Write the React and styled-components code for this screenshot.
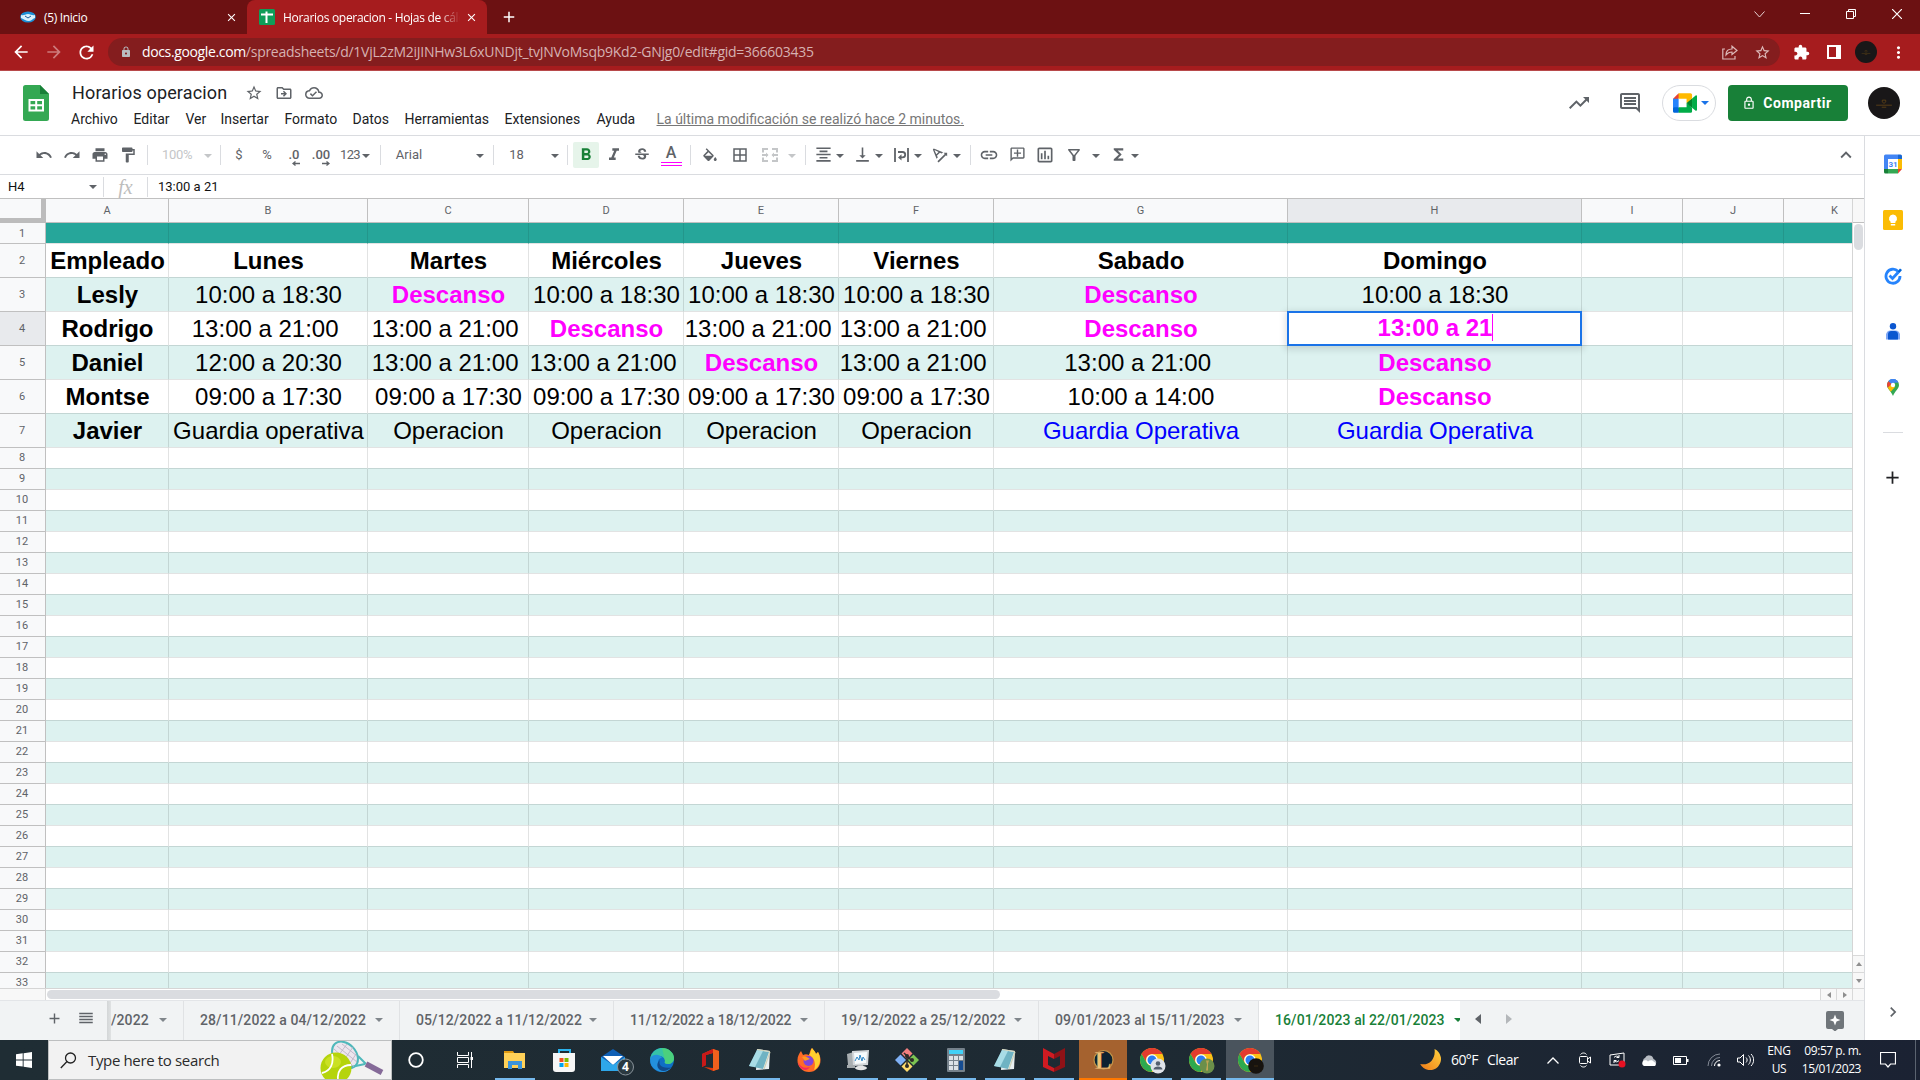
import React from "react";
import styled, { createGlobalStyle, css } from "styled-components";
import {
  MdUndo, MdRedo, MdPrint, MdFormatPaint, MdFormatBold, MdFormatItalic, MdStrikethroughS,
  MdBorderAll, MdFormatAlignCenter, MdVerticalAlignBottom, MdTextRotationAngleup,
  MdLink, MdOutlineAddComment, MdOutlineInsertChart, MdOutlineFilterAlt, MdFunctions, MdStarBorder,
  MdOutlineDriveFileMove, MdOutlineCloudDone, MdTrendingUp, MdOutlineComment, MdOutlineLock, MdLock,
  MdExpandLess, MdExtension, MdArrowBack, MdArrowForward, MdRefresh, MdAdd, MdClose, MdChevronRight,
  MdMoreVert, MdReorder,
} from "react-icons/md";

const SANS = `"Liberation Sans", Arial, sans-serif`;
const ROBOTO = `Roboto, "Liberation Sans", sans-serif`;
const SEGOE = `"Open Sans", "Noto Sans", sans-serif`;

const Global = createGlobalStyle`
  * { box-sizing: border-box; }
  body { margin: 0; background: #fff; font-family: ${ROBOTO}; overflow: hidden; }
  svg { display: block; flex: none; }
`;

const Screen = styled.div`
  width: 1920px;
  height: 1080px;
  display: flex;
  flex-direction: column;
  overflow: hidden;
`;

const Slot = styled.div`
  width: ${(p) => p.$w}px;
  flex: none;
  display: flex;
  align-items: center;
  justify-content: center;
  white-space: nowrap;
`;

/* ---------- browser chrome ---------- */
const TabStrip = styled.div`
  height: 34px;
  flex: none;
  display: flex;
  background: #6c1112;
  color: #fff;
  font: 12px ${SEGOE};
`;
const BrowserTab = styled.div`
  width: ${(p) => p.$w}px;
  display: flex;
  align-items: center;
  padding: 0 9px 0 ${(p) => (p.$active ? 12 : 20)}px;
  background: ${(p) => (p.$active ? "#a61c1e" : "transparent")};
  border-radius: 8px 8px 0 0;
`;
const TabTitle = styled.span`
  flex: 1;
  margin-left: 8px;
  overflow: hidden;
  white-space: nowrap;
  letter-spacing: ${(p) => p.$ls}px;
  ${(p) => p.$fade && css`
    margin-right: 5px;
    mask-image: linear-gradient(90deg, #000 88%, transparent 100%);
  `}
`;
const WindowControls = styled.div`
  margin-left: auto;
  display: flex;
  height: 28px;
`;
const AddressRow = styled.div`
  height: 37px;
  flex: none;
  display: flex;
  align-items: center;
  background: #a61c1e;
  border-bottom: 1px solid #b84a4b;
  color: #fff;
  padding-left: 5px;
`;
const Omnibox = styled.div`
  width: 1672px;
  height: 28px;
  margin-left: 6px;
  padding: 0 2px 0 12px;
  border-radius: 14px;
  background: #841d1e;
  display: flex;
  align-items: center;
  color: #d6b1b1;
  font: 14px ${SEGOE};
`;
const Url = styled.span`
  flex: 1;
  margin-left: 10px;
  padding-bottom: 1px;
  letter-spacing: -0.27px;
  white-space: nowrap;
  b { font-weight: 400; color: #fff; letter-spacing: -0.36px; }
`;
const Avatar = styled.div`
  width: ${(p) => p.$d}px;
  height: ${(p) => p.$d}px;
  border-radius: 50%;
  background: #191718;
  display: flex;
  align-items: center;
  justify-content: center;
`;

/* ---------- document header ---------- */
const DocHeader = styled.header`
  height: 65px;
  flex: none;
  display: flex;
  border-bottom: 1px solid #dadce0;
  color: #5f6368;
`;
const LogoBox = styled.div`
  width: 71px;
  padding: 14px 0 0 23px;
`;
const TitleBlock = styled.div`
  display: flex;
  flex-direction: column;
  flex: 1;
`;
const TitleRow = styled.div`
  height: 26px;
  margin-top: 9px;
  display: flex;
  align-items: center;
`;
const DocTitle = styled.h1`
  margin: 0 10px 0 1px;
  width: 159px;
  font: 400 18px/26px ${ROBOTO};
  letter-spacing: 0.15px;
  color: #202124;
  white-space: nowrap;
`;
const MenuRow = styled.nav`
  display: flex;
  height: 26px;
  align-items: center;
  font-size: 14px;
  color: #202124;
  white-space: nowrap;
`;
const MenuItem = styled.span`
  width: ${(p) => p.$w}px;
`;
const LastEdit = styled.a`
  margin-left: 6px;
  color: #777;
  text-decoration: underline;
`;
const HeaderActions = styled.div`
  display: flex;
  align-items: center;
  height: 64px;
`;
const MeetPill = styled.div`
  width: 54px;
  height: 36px;
  margin: 0 12px 0 7px;
  border: 1px solid #dadce0;
  border-radius: 18px;
  display: flex;
  align-items: center;
  padding-left: 10px;
  gap: 4px;
`;
const ShareButton = styled.button`
  width: 120px;
  height: 36px;
  padding: 0 2px 0 0;
  margin-right: 20px;
  border: 0;
  border-radius: 4px;
  background: #188038;
  color: #fff;
  font: 700 14px ${ROBOTO};
  letter-spacing: 0.55px;
  display: flex;
  align-items: center;
  justify-content: center;
  gap: 7px;
`;

/* ---------- workspace ---------- */
const Workspace = styled.div`
  flex: 1;
  min-height: 0;
  display: flex;
`;
const Editor = styled.main`
  width: 1864px;
  display: flex;
  flex-direction: column;
`;
const SidePanel = styled.aside`
  flex: 1;
  border-left: 1px solid #dadce0;
  display: flex;
  flex-direction: column;
  align-items: center;
`;
const SideSlot = styled.div`
  height: ${(p) => p.$h}px;
  display: flex;
  align-items: center;
  justify-content: center;
`;
const SideRule = styled.div`
  width: 20px;
  height: 1px;
  background: #dadce0;
`;
const ToolbarRow = styled.div`
  height: 39px;
  flex: none;
  display: flex;
  align-items: center;
  padding-left: 29px;
  padding-bottom: 1px;
  border-bottom: 1px solid #dadce0;
  color: #5f6368;
  font-size: 13px;
`;
const Divider = styled.div`
  width: 1px;
  height: 20px;
  background: #dadce0;
`;
const Caret = styled.i`
  width: 0;
  height: 0;
  flex: none;
  border: 4px solid transparent;
  border-top-color: ${(p) => p.$c || "#5f6368"};
  border-bottom: 0;
  margin-top: ${(p) => (p.$raised ? 0 : 2)}px;
`;
const BoldToggle = styled.div`
  width: 26px;
  height: 26px;
  border-radius: 2px;
  background: #e6f4ea;
  color: #188038;
  display: flex;
  align-items: center;
  justify-content: center;
`;
const Decimal = styled.div`
  display: flex;
  flex-direction: column;
  align-items: flex-end;
  font: 500 13px/13px ${ROBOTO};
  margin-top: 5px;
`;
const TextColor = styled.div`
  width: 21px;
  height: 21px;
  margin-top: 2px;
  font: 500 16px/16px ${ROBOTO};
  text-align: center;
  border-bottom: 4px double #ff00ff;
`;
const ToolText = styled.span`
  color: ${(p) => (p.$dim ? "#c4c6c8" : "#5f6368")};
  letter-spacing: ${(p) => p.$ls || 0}px;
`;
const FormulaRow = styled.div`
  height: 23px;
  flex: none;
  display: flex;
  align-items: center;
  color: #111;
  font-size: 13px;
`;
const NameBox = styled.div`
  width: 103px;
  display: flex;
  align-items: center;
  justify-content: space-between;
  padding: 0 6px 0 8px;
`;
const Fx = styled.div`
  width: 43px;
  text-align: center;
  color: #bdbdbd;
  font: italic 20px/20px "Liberation Serif", serif;
`;
const FormulaText = styled.span`
  margin-left: 10px;
  letter-spacing: 0;
`;

/* ---------- grid ---------- */
const COLS = [123, 199, 161, 155, 155, 155, 294, 294, 101, 101, 68];
const TRACKS = "46px " + COLS.map((w) => w + "px").join(" ");

const SheetArea = styled.div`
  display: flex;
  height: 791px;
  flex: none;
  border-top: 1px solid #c0c0c0;
`;
const Grid = styled.div`
  width: 1853px;
  flex: none;
  overflow: hidden;
  border-right: 1px solid #d5d5d5;
  border-bottom: 1px solid #d5d5d5;
`;
const Row = styled.div`
  display: grid;
  grid-template-columns: ${TRACKS};
  height: ${(p) => p.$h}px;
`;
const HeadCell = styled.div`
  display: flex;
  align-items: center;
  justify-content: center;
  padding-right: ${(p) => (p.$row ? 1 : 0)}px;
  padding-bottom: ${(p) => (p.$short ? 1 : 0)}px;
  background: ${(p) => (p.$on ? "#e8eaed" : "#f8f9fa")};
  border-right: 1px solid #c0c0c0;
  border-bottom: 1px solid #c0c0c0;
  color: #5f6368;
  font: 11px ${ROBOTO};
  ${(p) => p.$last && css`
    border-right: 0;
    width: 68px;
    padding-left: 33px;
  `}
`;
const Corner = styled.div`
  background: #f8f9fa;
  border-right: 5px solid #bcbcbc;
  border-bottom: 5px solid #bcbcbc;
`;
const TONES = {
  head: ["#26a69a", "#23968b", "#e2e3e3"],
  white: ["#ffffff", "#e2e3e3", "#c3d6d4"],
  band: ["#ddf2f0", "#c3d6d4", "#e2e3e3"],
};
const Cell = styled.div`
  position: relative;
  min-width: 0;
  padding-left: 1px;
  background: ${(p) => TONES[p.$tone][0]};
  border-right: ${(p) => (p.$last ? 0 : 1)}px solid ${(p) => TONES[p.$tone][1]};
  border-bottom: 1px solid ${(p) => TONES[p.$tone][2]};
  display: flex;
  justify-content: center;
  white-space: pre;
  font: ${(p) => (p.$bold ? 700 : 400)} 24px/33px ${SANS};
  color: ${(p) => p.$color || "#000"};
`;
const CellEditor = styled.div`
  position: absolute;
  inset: -1px;
  z-index: 2;
  padding-left: 2px;
  border: 2px solid #1a73e8;
  background: #fff;
  box-shadow: 0 2px 6px 2px rgba(60, 64, 67, 0.15);
  color: #ff00ff;
  font: 700 24px/30px ${SANS};
  display: flex;
  justify-content: center;
`;
const Cursor = styled.span`
  width: 1px;
  height: 27px;
  margin-top: 1px;
  background: #ff00ff;
`;
const VScroll = styled.div`
  flex: 1;
  display: flex;
  flex-direction: column;
  align-items: center;
`;
const VHead = styled.div`
  align-self: stretch;
  height: 24px;
  background: #f8f8f8;
  border-bottom: 1px solid #c0c0c0;
`;
const VThumb = styled.div`
  width: 9px;
  height: 26px;
  margin-top: 1px;
  border-radius: 5px;
  background: #dadce0;
`;
const VButtons = styled.div`
  margin-top: auto;
  align-self: stretch;
`;
const ScrollButton = styled.div`
  width: ${(p) => p.$w}px;
  height: ${(p) => p.$h}px;
  display: flex;
  align-items: center;
  justify-content: center;
  background: #f8f8f8;
  border: solid #d9d9d9;
  border-width: ${(p) => p.$b};
`;
const HScroll = styled.div`
  height: 11px;
  flex: none;
  display: flex;
  align-items: center;
`;
const HCorner = styled.div`
  width: 46px;
  height: 11px;
  background: #f8f8f8;
  border-right: 1px solid #d9d9d9;
`;
const HThumb = styled.div`
  width: 953px;
  height: 9px;
  margin: 0 auto 0 1px;
  border-radius: 5px;
  background: #dadce0;
`;

/* ---------- sheet tabs ---------- */
const SheetBar = styled.div`
  flex: 1;
  display: flex;
  background: #f1f3f4;
  border-top: 1px solid #e3e5e8;
  color: #5f6368;
`;
const SheetTools = styled.div`
  width: 107px;
  display: flex;
  align-items: center;
  padding: 0 0 5px 39px;
`;
const TabShade = styled.div`
  width: 6px;
  margin-right: -2px;
  background: linear-gradient(90deg, #d3d6d7, #e6e8e9);
`;
const SheetTab = styled.div`
  width: ${(p) => p.$w}px;
  padding: 0 16px 1px ${(p) => (p.$cut ? 0 : 16)}px;
  display: flex;
  align-items: center;
  justify-content: space-between;
  overflow: hidden;
  border-right: 1px solid ${(p) => (p.$on ? "transparent" : "#e0e2e4")};
  background: ${(p) => (p.$on ? "#fff" : "#f1f3f4")};
  color: ${(p) => (p.$on ? "#188038" : "#5f6368")};
  font: 500 14px ${ROBOTO};
  letter-spacing: ${(p) => p.$ls || 0.1}px;
  white-space: nowrap;
  ${(p) => p.$on && css`
    padding-right: 0;
    border-right: 0;
  `}
`;
const SheetNav = styled.div`
  flex: 1;
  display: flex;
  align-items: center;
`;

/* ---------- taskbar ---------- */
const TaskBar = styled.footer`
  height: 40px;
  flex: none;
  display: flex;
  background: linear-gradient(90deg, #1f2d34, #1e2a33 60%, #1b2233);
  color: #fff;
  font: 12px ${SEGOE};
`;
const SearchBox = styled.div`
  width: 344px;
  height: 40px;
  border: 1px solid #bdbfc0;
  background: #f2f2f2;
  color: #2b2b2b;
  display: flex;
  align-items: center;
  padding-left: 11px;
  font: 15px ${SEGOE};
`;
const SearchText = styled.span`
  flex: 1;
  margin-left: 11px;
  letter-spacing: -0.35px;
`;
const Apps = styled.div`
  display: flex;
  gap: 1px;
  margin-left: 2px;
`;
const AppButton = styled.div`
  width: 48px;
  height: 40px;
  display: flex;
  flex-direction: column;
  align-items: center;
  justify-content: space-between;
  padding-top: 8px;
  background: ${(p) => ({ alert: "#a5622f", active: "#4a545d" }[p.$state] || "transparent")};
`;
const Under = styled.div`
  width: ${(p) => (p.$state === "open" ? 40 : 48)}px;
  height: 2px;
  background: ${(p) => ({ alert: "#ff7800", active: "#76b9ed", open: "#76b9ed" }[p.$state] || "transparent")};
`;
const Tray = styled.div`
  margin-left: auto;
  display: flex;
  align-items: center;
`;
const TrayText = styled.div`
  width: ${(p) => p.$w}px;
  text-align: ${(p) => p.$align || "left"};
  line-height: 18px;
  letter-spacing: ${(p) => p.$ls || 0}px;
  font-size: ${(p) => p.$fs || 12}px;
  white-space: pre;
`;
const DesktopEdge = styled.div`
  width: 5px;
  height: 40px;
  border-left: 1px solid #5b6370;
`;

/* ---------- drawings ---------- */
const Svg = ({ w = 16, h = w, vb, children, ...r }) => (
  <svg width={w} height={h} viewBox={vb || `0 0 ${w} ${h}`} fill="none" {...r}>{children}</svg>
);

const Handshake = () => (
  <Svg w={16} h={12}>
    <ellipse cx="8" cy="6" rx="7.8" ry="5.6" fill="#1b8fd6" />
    <path d="M1 4c3 1 4-1 7-1s4 2 7 1v3c-2 0-3 3-6 3S4 8 1 7z" fill="#d9f0fb" />
    <path d="M5 5l3 2 3-2" stroke="#1b5f9d" />
  </Svg>
);
const SheetFavicon = () => (
  <Svg w={16}>
    <rect width="16" height="16" rx="1.5" fill="#0f9d58" />
    <path d="M2 5.5h12M7.5 2.5V14" stroke="#fff" strokeWidth="2" />
  </Svg>
);
const SheetsLogo = () => (
  <Svg w={26} h={36}>
    <path d="M2.5 0H17l9 9v24.500a2.500 2.500 0 0 1-2.500 2.500h-21A2.500 2.500 0 0 1 0 33.500v-31A2.500 2.500 0 0 1 2.500 0z" fill="#34a853" />
    <path d="M17 0l9 9h-9z" fill="#188038" />
    <path d="M5.500 14h15.500v12.500H5.500zM7.500 16v3.200h4.700V16zm6.700 0v3.200H19V16zm-6.700 5.200v3.300h4.700v-3.300zm6.700 0v3.300H19v-3.300z" fill="#fff" fillRule="evenodd" />
  </Svg>
);
const Crest = ({ s }) => (
  <Svg w={s} h={s / 2} vb="0 0 16 8">
    <path d="M6.500 1h3v1.500L8 4 6.500 2.500zM1 5.500h14M6 7.300h4" stroke="#5d4216" strokeWidth=".8" />
  </Svg>
);
const MeetLogo = () => (
  <Svg w={24} h={20} vb="0 0 87.5 72">
    <path fill="#00832d" d="M49.500 36l8.530 9.750 11.470 7.330 2-17.020-2-16.640-11.690 6.440z" />
    <path fill="#0066da" d="M0 51.500V66c0 3.315 2.685 6 6 6h14.500l3-10.960-3-9.540-9.950-3z" />
    <path fill="#e94235" d="M20.500 0L0 20.500l10.550 3 9.950-3 2.950-9.410z" />
    <path fill="#2684fc" d="M20.500 20.500H0v31h20.500z" />
    <path fill="#00ac47" d="M82.600 8.680L69.500 19.420v33.660l13.160 10.790c1.970 1.540 4.850.135 4.850-2.370V11c0-2.535-2.945-3.925-4.910-2.320zM49.500 36v15.500h-29V72h43c3.315 0 6-2.685 6-6V53.080z" />
    <path fill="#ffba00" d="M63.500 0h-43v20.500h29V36l20-16.570V6c0-3.315-2.685-6-6-6z" />
  </Svg>
);
const BucketIcon = () => (
  <Svg w={18} vb="0 -3 24 24">
    <path fill="#5f6368" d="M16.560 8.940L7.620 0 6.210 1.410l2.380 2.380-5.150 5.150a1.490 1.490 0 0 0 0 2.120l5.500 5.500c.290.290.680.440 1.060.440s.770-.150 1.060-.440l5.500-5.500c.590-.580.590-1.530 0-2.120zM5.210 10L10 5.210 14.790 10H5.210zM19 11.500s-2 2.170-2 3.500c0 1.100.900 2 2 2s2-.900 2-2c0-1.330-2-3.500-2-3.500z" />
  </Svg>
);
const MergeIcon = () => (
  <Svg w={16} h={14} stroke="#c4c6c8" strokeWidth="2">
    <path d="M1 4.500V1h5M10 1h5v3.500M1 9.500V13h5M10 13h5V9.500M0 7h5.500M10.500 7H16" />
    <path d="M4 4.500L6.500 7 4 9.500zM12 4.500L9.500 7l2.500 2.500z" fill="#c4c6c8" stroke="none" />
  </Svg>
);
const WrapIcon = () => (
  <Svg w={15} h={14} stroke="#5f6368" strokeWidth="1.800">
    <path d="M1 0v14M14 0v14M4 4h4.500a2.700 2.700 0 0 1 0 5.400H6.500" />
    <path d="M7.500 6.300v6.200L4 9.400z" fill="#5f6368" stroke="none" />
  </Svg>
);
const Calendar = () => (
  <Svg w={20}>
    <path d="M1 2a1.500 1.500 0 0 1 1.500-1.500H15V5H5v10H1z" fill="#4285f4" />
    <path d="M15 .5h2.500A1.500 1.500 0 0 1 19 2v3h-4z" fill="#1967d2" />
    <path d="M15 5h4v10h-4z" fill="#fbbc04" />
    <path d="M5 15h10v4.500H5z" fill="#34a853" />
    <path d="M1 15h4v4.500H2.500A1.500 1.500 0 0 1 1 18z" fill="#188038" />
    <path d="M15 15h4l-4 4.500z" fill="#ea4335" />
    <text x="10" y="13" textAnchor="middle" fontSize="8" fontWeight="700" fontFamily="Roboto" fill="#4285f4">31</text>
  </Svg>
);
const Keep = () => (
  <Svg w={20}>
    <rect width="20" height="20" rx="1.500" fill="#fbbc04" />
    <path d="M10 4.500a4 4 0 0 1 2.400 7.200V13H7.600v-1.300A4 4 0 0 1 10 4.500zM7.800 14h4.400v1.500H7.800z" fill="#fff" />
  </Svg>
);
const Tasks = () => (
  <Svg w={18}>
    <path d="M14 4.300A7 7 0 1 0 16 9" stroke="#2684fc" strokeWidth="2.800" />
    <path d="M5.500 8.500L8.500 11.500l6-6.500" stroke="#2684fc" strokeWidth="2.800" />
    <path d="M13.500 4.500l2.500-3 2 1.500-2.500 3z" fill="#0066da" />
  </Svg>
);
const Contact = () => (
  <Svg w={14} h={17}>
    <rect y="7.500" width="14" height="9" rx="4.500" fill="#80a8f5" />
    <path d="M0 11h14v5.500H0z" fill="#80a8f5" />
    <path d="M2 11.500a3.500 3.500 0 0 1 3.500-3.500h3A3.500 3.500 0 0 1 12 11.500v5H2z" fill="#0b57d0" />
    <circle cx="7" cy="3.200" r="3.200" fill="#0b57d0" />
  </Svg>
);
const MapPin = () => (
  <Svg w={12} h={17}>
    <path d="M6 0a6 6 0 0 1 6 6c0 4-4.500 6.500-6 11C4.500 12.500 0 10 0 6a6 6 0 0 1 6-6z" fill="#34a853" />
    <path d="M1.300 2.200A6 6 0 0 1 9 .8L4 7.500z" fill="#4285f4" />
    <path d="M1.400 2.200L4.500 5 1 9A6 6 0 0 1 1.400 2.200z" fill="#ea4335" />
    <path d="M.8 8.800L4.500 5 8 8l-4.300 4.800z" fill="#fbbc04" />
    <path d="M11.500 3.500A6 6 0 0 0 7.800.3L4.500 4z" fill="#4285f4" />
    <circle cx="6" cy="6" r="2.200" fill="#fff" />
  </Svg>
);
const Explore = () => (
  <Svg w={18} h={20}>
    <path d="M2 0h14a2 2 0 0 1 2 2v14a2 2 0 0 1-2 2h-4l-3 2.500L6 18H2a2 2 0 0 1-2-2V2a2 2 0 0 1 2-2z" fill="#70757a" />
    <path d="M9 3.500l1.500 4 4 1.500-4 1.500-1.500 4-1.500-4-4-1.500 4-1.500z" fill="#fff" />
  </Svg>
);
const WindowsLogo = () => (
  <Svg w={16}>
    <path fill="#fff" d="M0 2.300L6.700 1.300v6.200H0zM7.600 1.200L16 0v7.500H7.600zM0 8.400h6.700v6.200L0 13.700zM7.600 8.400H16V16l-8.400-1.200z" />
  </Svg>
);
const Tennis = () => (
  <Svg w={66} h={38}>
    <g stroke="#4fb8bb" strokeWidth="2">
      <ellipse cx="25" cy="14" rx="11" ry="15" transform="rotate(-42 25 14)" fill="#ece6ee" />
      <path d="M31 26l14-3M38 15l8 8" />
    </g>
    <path d="M14 8l20 18M17 5l20 16M22 3l15 12M13 14l15 14M20 25L33 6M15 19L27 3M27 27l9-14" stroke="#b9aec2" strokeWidth=".8" />
    <path d="M46 23l16 8.500" stroke="#856a98" strokeWidth="5.500" />
    <circle cx="16" cy="27" r="15.500" fill="#b5d40c" />
    <ellipse cx="13" cy="21" rx="8" ry="6" fill="#d3e72f" opacity=".7" />
    <path d="M2 32c9-2 12-10 10-19M31 24c-10 0-14 7-13 14" stroke="#fff" strokeWidth="1.800" />
  </Svg>
);
const TaskView = () => (
  <Svg w={16} h={16} stroke="#fff">
    <path d="M.5 0v3.500h11V0M.5 16v-3.500h11V16M.5 5.500h11v5H.5zM14.500 0v5M14.500 8v8" />
    <path d="M13.500 5h2.500v3h-2.500z" fill="#fff" stroke="none" />
  </Svg>
);
const Folder = () => (
  <Svg w={24}>
    <path d="M1 3h9l2 3H1z" fill="#e09a12" /><path d="M1 5h21v15H1z" fill="#ffd158" />
    <path d="M5 13h14v8h-4v-4H9v4H5z" fill="#3b94dc" />
  </Svg>
);
const Store = () => (
  <Svg w={24}>
    <path d="M7 6V2h11v4" stroke="#2bb3ee" strokeWidth="2" />
    <path d="M1 5h22v16a3 3 0 0 1-3 3H4a3 3 0 0 1-3-3z" fill="#f6f6f6" />
    <path d="M7.500 10h4v4h-4z" fill="#f25022" /><path d="M12.500 10h4v4h-4z" fill="#7fba00" />
    <path d="M7.500 15h4v4h-4z" fill="#00a4ef" /><path d="M12.500 15h4v4h-4z" fill="#ffb900" />
  </Svg>
);
const Mail = () => (
  <Svg w={34} h={28} style={{ marginLeft: 8 }}>
    <path d="M1 9L13 1l12 8v14H1z" fill="#0f5fb5" /><path d="M3 8h20L13 17z" fill="#fff" />
    <path d="M1 9l12 8L25 9v14H1z" fill="#2ea7ea" />
    <circle cx="25.500" cy="19" r="8" fill="#2b3940" stroke="#89939a" />
    <text x="25.500" y="23.300" textAnchor="middle" fontSize="12" fontWeight="700" fontFamily="Open Sans" fill="#fff">4</text>
  </Svg>
);
const Edge = () => (
  <Svg w={24}>
    <circle cx="12" cy="12" r="12" fill="#0f6fc5" />
    <path d="M.5 9C3 2 8 0 12 0c7 0 12 5 12 10 0 4-3 6-6 6-3 0-4-1-3-3 0-3-3-5-6-5-4 0-7 1-8.500 4z" fill="#36c3a8" />
    <path d="M12 0c7 0 12 5 12 10 0 4-3 6-6 6-3 0-4-1-3-3z" fill="#54d66b" opacity=".7" />
    <path d="M1 9c3-3 9-3 11 1-4 0-5 4-3 8 3 4 8 4 12 2-3 4-9 5-13 3C1 20-1 14 1 9z" fill="#2390dd" />
    <path d="M10 12c-2 4 1 9 11 7.500C18 23 13 24 10 22c-4-3-3-8 0-10z" fill="#114a8b" />
  </Svg>
);
const Office = () => (
  <Svg w={20} h={24}>
    <path d="M1 6l11-5 6 2v18l-6 2-9-4 9 1V5L5 7v10l-4 2z" fill="#e2380c" />
    <path d="M12 1l6 2v18l-6 2z" fill="#f0601d" /><path d="M1 6l11-5v4L5 7v10l-4 2z" fill="#c91919" />
  </Svg>
);
const Notepad = () => (
  <Svg w={24}>
    <path d="M9 1l13 2-1 18-13 1z" fill="#e8eff1" /><path d="M9 2l12 2-6 17-14-3z" fill="#6fb3c3" />
    <path d="M9 2l6 1-8 16-6-1z" fill="#a8dce6" /><path d="M9 1.500l13 2M16 21l6-17" stroke="#cfd3ba" strokeWidth="1.200" />
  </Svg>
);
const Firefox = () => (
  <Svg w={24}>
    <path d="M12 24A11.500 11.500 0 0 1 .5 12C.5 8 2 6 4 3l2 4c2-1 4-1 6 0 1-3 1-5 3-7 2 3 3 3 4 6l2-2c2 3 2.500 6 2.500 8A11.500 11.500 0 0 1 12 24z" fill="#ff6a26" />
    <path d="M15 0c2 3 3 3 4 6l2-2c4 7 2 15-4 18 2-6 1-12-5-15 2-2 1-4 3-7z" fill="#ffd02e" />
    <path d="M1 14c2 5 7 7 12 5-4 6-11 2-12-5z" fill="#f52a5c" />
    <circle cx="11.500" cy="13" r="5" fill="#8046d9" /><path d="M5 9c3-1 5 0 8 2-2 1-4 1-5 2z" fill="#ff9a1f" />
  </Svg>
);
const Monitor = () => (
  <Svg w={26} h={24}>
    <path d="M2 6l10-3v14H3z" fill="#a9afb2" /><path d="M7 3l17-1-1 15-15 1z" fill="#d3d7da" />
    <path d="M9 5l13-1-1 11-11 1z" fill="#f6fbfd" /><path d="M10 13l2-4 2 3 1-5 2 6 1-4 2 3" stroke="#3187c6" />
    <path d="M13 17h5l1 3h-7z" fill="#b6bbbd" /><ellipse cx="16" cy="20" rx="6" ry="2.200" fill="#e3e5e6" />
    <path d="M2 17h8v3H2z" fill="#a4aaad" />
  </Svg>
);
const Git = () => (
  <Svg w={24}>
    <path d="M12 0l5.500 5.500L12 11 6.500 5.500z" fill="#f27f7f" /><path d="M18.500 6.500L24 12l-5.500 5.500L13 12z" fill="#7cc452" />
    <path d="M12 13l5.500 5.500L12 24l-5.500-5.500z" fill="#ffdb6b" /><path d="M5.500 6.500L11 12l-5.500 5.500L0 12z" fill="#7fb0f5" />
    <g stroke="#2d2b27" strokeWidth="1.500"><path d="M9 5l8 8M12 8v10" /></g>
    <g fill="#2d2b27"><circle cx="12" cy="8" r="2" /><circle cx="17" cy="12" r="2" /><circle cx="12" cy="18" r="2" /></g>
  </Svg>
);
const Calculator = () => (
  <Svg w={18} h={24}>
    <rect width="18" height="24" rx="1" fill="#75818b" /><path d="M2 2h14v4H2z" fill="#42d1f7" />
    <path d="M2 8h4v4H2zM7 8h4v4H7zM12 8h4v4h-4zM2 13h4v4H2zM7 13h4v4H7zM2 18h4v4H2zM7 18h4v4H7z" fill="#dce2e7" />
    <path d="M12 13h4v9h-4z" fill="#164c91" />
  </Svg>
);
const McAfee = () => (
  <Svg w={22} h={24}>
    <path d="M0 0l11 6v5L5 8v9l6 3v4L0 19z" fill="#d01b22" />
    <path d="M22 0L11 6v5l6-3v9l-6 3v4l11-5z" fill="#8f1217" />
  </Svg>
);
const League = () => (
  <Svg w={24}>
    <circle cx="12.500" cy="12" r="9.500" fill="#0b2231" stroke="#c29447" strokeWidth="1.200" />
    <text x="12" y="20.500" textAnchor="middle" fontSize="25" fontWeight="700" fontFamily="Liberation Serif" fill="#eec375" stroke="#a5622f" strokeWidth=".3">L</text>
  </Svg>
);
const Chrome = ({ badge }) => (
  <Svg w={28} h={26} style={{ marginLeft: 3 }}>
    <circle cx="12" cy="12" r="12" fill="#fbc116" />
    <path d="M1.600 6A12 12 0 0 1 22.400 6H12a6 6 0 0 0-5.500 8.500z" fill="#e33b2e" />
    <path d="M1.600 6l5.200 9A6 6 0 0 0 14 17.600L11.500 24A12 12 0 0 1 1.600 6z" fill="#2da94f" />
    <circle cx="12" cy="12" r="5.800" fill="#fff" /><circle cx="12" cy="12" r="4.500" fill="#2c7ef0" />
    {badge === "user" && <g><circle cx="18" cy="18" r="7.500" fill="#dfe3e9" /><circle cx="18" cy="15.500" r="2.300" fill="#54606f" /><path d="M13.500 21.500c0-4 9-4 9 0z" fill="#54606f" /></g>}
    {badge === "photo" && <g><circle cx="18" cy="18" r="7.500" fill="#6b8f4a" /><path d="M17 12.500h3l-1 3v7h-2l1-6z" fill="#c1a553" /></g>}
    {badge === "dark" && <g><circle cx="18" cy="18" r="7.800" fill="#17130f" /><path d="M16 18h4" stroke="#3a2a12" /></g>}
  </Svg>
);
const Moon = () => (
  <Svg w={22}>
    <defs><linearGradient id="moon" x1="0" y1="1" x2="1" y2="0"><stop stopColor="#f07a18" /><stop offset="1" stopColor="#ffd23d" /></linearGradient></defs>
    <path d="M14.500 0A11 11 0 1 1 .2 15C9 17 16 10 14.500 0z" fill="url(#moon)" />
  </Svg>
);

/* ---------- content ---------- */
const MENUS = [["Archivo", 62.5], ["Editar", 52], ["Ver", 35], ["Insertar", 64], ["Formato", 68], ["Datos", 52], ["Herramientas", 100], ["Extensiones", 92], ["Ayuda", 54]];
const D = "Descanso";
const M = "10:00 a 18:30";
const T = "13:00 a 21:00 ";
const N = "09:00 a 17:30";
const O = "Operacion";
const GO = "Guardia Operativa";
const DATA = {
  2: ["Empleado", "Lunes", "Martes", "Miércoles", "Jueves", "Viernes", "Sabado", "Domingo"],
  3: ["Lesly", M, D, M, M, M, D, M],
  4: ["Rodrigo", T, T, D, T, T, D, "13:00 a 21"],
  5: ["Daniel", "12:00 a 20:30", T, T, D, T, T, D],
  6: ["Montse", N, N, N, N, N, "10:00 a 14:00", D],
  7: ["Javier", "Guardia operativa", O, O, O, O, GO, GO],
};
const SHEETS = [
  ["28/11/2022 a 04/12/2022", 216], ["05/12/2022 a 11/12/2022", 214], ["11/12/2022 a 18/12/2022", 211, -0.1],
  ["19/12/2022 a 25/12/2022", 214, 0.04], ["09/01/2023 al 15/11/2023", 220],
];
const APPS = [
  [Folder, "open"], [Store], [Mail], [Edge], [Office], [Notepad, "open"], [Firefox], [Monitor, "open"], [Git, "open"],
  [Calculator, "open"], [Notepad, "open"], [McAfee, "open"], [League, "alert"], [Chrome, "open", "user"],
  [Chrome, "open", "photo"], [Chrome, "active", "dark"],
];

const Sep = ({ w }) => <Slot $w={w}><Divider /></Slot>;
const Drop = ({ children }) => (<><Slot $w={20}>{children}</Slot><Slot $w={14}><Caret /></Slot></>);

function BrowserChrome() {
  return (
    <>
      <TabStrip>
        <BrowserTab $w={247}>
          <Handshake /><TabTitle $ls={-0.35}>(5) Inicio</TabTitle><MdClose size={13} />
        </BrowserTab>
        <BrowserTab $w={240} $active>
          <SheetFavicon /><TabTitle $ls={-0.3} $fade>Horarios operacion - Hojas de cálculo</TabTitle><MdClose size={13} />
        </BrowserTab>
        <Slot $w={44}><MdAdd size={18} /></Slot>
        <WindowControls>
          <Slot $w={46}><Svg w={11} h={7}><path d="M.5.5l5 5.500 5-5.500" stroke="#e6d3d3" /></Svg></Slot>
          <Slot $w={46}><Svg w={10} h={2}><path d="M0 .5h10" stroke="#fff" /></Svg></Slot>
          <Slot $w={46}><Svg w={10}><path d="M.5 2.500h7v7h-7zM2.500 2.500v-2h7v7h-2" stroke="#fff" /></Svg></Slot>
          <Slot $w={46}><Svg w={10}><path d="M0 0l10 10M10 0L0 10" stroke="#fff" strokeWidth="1.200" /></Svg></Slot>
        </WindowControls>
      </TabStrip>
      <AddressRow>
        <Slot $w={32}><MdArrowBack size={20} /></Slot>
        <Slot $w={33}><MdArrowForward size={20} color="#cd7b7c" /></Slot>
        <Slot $w={32}><MdRefresh size={21} /></Slot>
        <Omnibox>
          <MdLock size={12} color="#b9bcc0" />
          <Url><b>docs.google.com</b>/spreadsheets/d/1VjL2zM2iJINHw3L6xUNDjt_tvJNVoMsqb9Kd2-GNjg0/edit#gid=366603435</Url>
          <Slot $w={32}>
            <Svg w={16} h={15} stroke="#dcb9b9" strokeWidth="1.200"><path d="M3 4H.8v10H13v-3M4 10c0-4 2-6 6-6V1.200L15 5.500 10 9.500V7C7 7 5.500 8 4 10z" /></Svg>
          </Slot>
          <Slot $w={32}><MdStarBorder size={17} color="#dcb9b9" /></Slot>
        </Omnibox>
        <Slot $w={42}><MdExtension size={17} /></Slot>
        <Slot $w={24}><Svg w={14} h={14}><path d="M1 1h12v12H1z" stroke="#fff" strokeWidth="2" /><path d="M9 1h4v12H9z" fill="#fff" /></Svg></Slot>
        <Slot $w={40}><Avatar $d={22}><Crest s={10} /></Avatar></Slot>
        <Slot $w={24}><MdMoreVert size={19} /></Slot>
      </AddressRow>
    </>
  );
}

function Header() {
  return (
    <DocHeader>
      <LogoBox><SheetsLogo /></LogoBox>
      <TitleBlock>
        <TitleRow>
          <DocTitle>Horarios operacion</DocTitle>
          <Slot $w={26}><MdStarBorder size={18} /></Slot>
          <Slot $w={33}><MdOutlineDriveFileMove size={18} /></Slot>
          <Slot $w={28}><MdOutlineCloudDone size={18} /></Slot>
        </TitleRow>
        <MenuRow>
          {MENUS.map(([m, w]) => <MenuItem key={m} $w={w}>{m}</MenuItem>)}
          <LastEdit>La última modificación se realizó hace 2 minutos.</LastEdit>
        </MenuRow>
      </TitleBlock>
      <HeaderActions>
        <Slot $w={50}><MdTrendingUp size={24} /></Slot>
        <Slot $w={51}><MdOutlineComment size={24} /></Slot>
        <MeetPill><MeetLogo /><Caret $c="#1a73e8" $raised /></MeetPill>
        <ShareButton><MdOutlineLock size={14} />Compartir</ShareButton>
        <Avatar $d={32}><Crest s={18} /></Avatar>
        <Slot $w={20} />
      </HeaderActions>
    </DocHeader>
  );
}

function Toolbar() {
  return (
    <ToolbarRow>
      <Slot $w={29}><MdUndo size={18} /></Slot>
      <Slot $w={28}><MdRedo size={18} /></Slot>
      <Slot $w={28}><MdPrint size={18} /></Slot>
      <Slot $w={28}><MdFormatPaint size={18} /></Slot>
      <Sep w={10} />
      <Slot $w={50}><ToolText $dim $ls={-0.3}>100%</ToolText></Slot>
      <Slot $w={12}><Caret $c="#c4c6c8" /></Slot>
      <Sep w={12} />
      <Slot $w={26}><ToolText>$</ToolText></Slot>
      <Slot $w={30}><ToolText>%</ToolText></Slot>
      <Slot $w={24}><Decimal>.0<Svg w={8} h={5}><path d="M8 2.500H2M3.500 .5L1 2.500l2.500 2" stroke="#5f6368" strokeWidth="1.300" /></Svg></Decimal></Slot>
      <Slot $w={30}><Decimal>.00<Svg w={8} h={5}><path d="M0 2.500h6M4.500 .5L7 2.500l-2.500 2" stroke="#5f6368" strokeWidth="1.300" /></Svg></Decimal></Slot>
      <Slot $w={28}><ToolText $ls={-0.6}>123</ToolText></Slot>
      <Slot $w={4}><Caret /></Slot>
      <Sep w={24} />
      <Slot $w={34}><ToolText>Arial</ToolText></Slot>
      <Slot $w={48} />
      <Slot $w={12}><Caret /></Slot>
      <Sep w={14} />
      <Slot $w={33}><ToolText>18</ToolText></Slot>
      <Slot $w={16} />
      <Slot $w={12}><Caret /></Slot>
      <Sep w={12} />
      <BoldToggle><MdFormatBold size={20} /></BoldToggle>
      <Slot $w={30}><MdFormatItalic size={20} /></Slot>
      <Slot $w={26}><MdStrikethroughS size={18} /></Slot>
      <Slot $w={32}><TextColor>A</TextColor></Slot>
      <Sep w={6} />
      <Slot $w={34}><BucketIcon /></Slot>
      <Slot $w={26}><MdBorderAll size={18} /></Slot>
      <Slot $w={34}><MergeIcon /></Slot>
      <Slot $w={10}><Caret $c="#c4c6c8" /></Slot>
      <Sep w={16} />
      <Drop><MdFormatAlignCenter size={19} /></Drop>
      <Slot $w={5} />
      <Drop><MdVerticalAlignBottom size={19} /></Drop>
      <Slot $w={5} />
      <Drop><WrapIcon /></Drop>
      <Slot $w={5} />
      <Drop><MdTextRotationAngleup size={20} /></Drop>
      <Sep w={13} />
      <Slot $w={24}><MdLink size={20} /></Slot>
      <Slot $w={32}><MdOutlineAddComment size={17} style={{ transform: "scaleX(-1)" }} /></Slot>
      <Slot $w={24}><MdOutlineInsertChart size={20} /></Slot>
      <Slot $w={34}><MdOutlineFilterAlt size={18} /></Slot>
      <Slot $w={10}><Caret /></Slot>
      <Slot $w={7} />
      <Drop><MdFunctions size={19} /></Drop>
      <Slot $w={692} />
      <Slot $w={24}><MdExpandLess size={22} /></Slot>
    </ToolbarRow>
  );
}

function SheetRow({ n }) {
  const tone = n === 1 ? "head" : n % 2 ? "band" : "white";
  const values = DATA[n] || [];
  return (
    <Row $h={n > 1 && n < 8 ? 34 : 21}>
      <HeadCell $row $short={n > 7} $on={n === 4}>{n}</HeadCell>
      {COLS.map((_, c) => {
        const v = values[c];
        const editing = n === 4 && c === 7;
        const color = v === D ? "#ff00ff" : v === GO ? "#0000ff" : undefined;
        return (
          <Cell key={c} $tone={tone} $last={c === 10} $bold={n === 2 || c === 0 || v === D} $color={color}>
            {editing ? <CellEditor>{v}<Cursor /></CellEditor> : v}
          </Cell>
        );
      })}
    </Row>
  );
}

const Tri = ({ d, c = "#8f8f8f" }) => <Svg w={6} h={6}><path d={d} fill={c} /></Svg>;

function Sheet() {
  return (
    <>
      <SheetArea>
        <Grid>
          <Row $h={24}>
            <Corner />
            {COLS.map((_, c) => <HeadCell key={c} $on={c === 7} $last={c === 10}>{"ABCDEFGHIJK"[c]}</HeadCell>)}
          </Row>
          {Array.from({ length: 33 }, (_, i) => <SheetRow key={i} n={i + 1} />)}
        </Grid>
        <VScroll>
          <VHead />
          <VThumb />
          <VButtons>
            <ScrollButton $w={11} $h={17} $b="1px 0 0 0"><Tri d="M0 5l3-4 3 4z" /></ScrollButton>
            <ScrollButton $w={11} $h={17} $b="1px 0 1px 0"><Tri d="M0 1l3 4 3-4z" /></ScrollButton>
          </VButtons>
        </VScroll>
      </SheetArea>
      <HScroll>
        <HCorner />
        <HThumb />
        <ScrollButton $w={16} $h={11} $b="0 0 0 1px"><Tri d="M5 0L1 3l4 3z" /></ScrollButton>
        <ScrollButton $w={16} $h={11} $b="0 0 0 1px"><Tri d="M1 0l4 3-4 3z" /></ScrollButton>
        <ScrollButton $w={12} $h={11} $b="0 0 0 1px" />
      </HScroll>
    </>
  );
}

function SheetTabs() {
  return (
    <SheetBar>
      <SheetTools>
        <Slot $w={31}><MdAdd size={17} /></Slot>
        <Slot $w={31}><MdReorder size={18} /></Slot>
      </SheetTools>
      <TabShade />
      <SheetTab $w={73} $cut>/2022<Caret $raised $c="#80868b" /></SheetTab>
      {SHEETS.map(([t, w, ls]) => <SheetTab key={t} $w={w} $ls={ls}>{t}<Caret $raised $c="#80868b" /></SheetTab>)}
      <SheetTab $w={201} $on>16/01/2023 al 22/01/2023<Slot $w={5}><Caret $raised $c="#188038" /></Slot></SheetTab>
      <SheetNav>
        <Slot $w={36}><Svg w={6} h={10} style={{ marginBottom: 4 }}><path d="M6 0v10L0 5z" fill="#5f6368" /></Svg></Slot>
        <Slot $w={26}><Svg w={6} h={10} style={{ marginBottom: 4 }}><path d="M0 0v10l6-5z" fill="#b4b7ba" /></Svg></Slot>
        <Slot $w={294} />
        <Slot $w={38}><Explore /></Slot>
      </SheetNav>
    </SheetBar>
  );
}

function Side() {
  return (
    <SidePanel>
      <SideSlot $h={56}><Calendar /></SideSlot>
      <SideSlot $h={56}><Keep /></SideSlot>
      <SideSlot $h={56}><Tasks /></SideSlot>
      <SideSlot $h={55}><Contact /></SideSlot>
      <SideSlot $h={57}><MapPin /></SideSlot>
      <SideSlot $h={16} />
      <SideRule />
      <SideSlot $h={88}><MdAdd size={21} color="#202124" /></SideSlot>
      <SideSlot $h={468} />
      <SideSlot $h={46}><MdChevronRight size={20} color="#5f6368" /></SideSlot>
    </SidePanel>
  );
}

function WindowsTaskbar() {
  return (
    <TaskBar>
      <Slot $w={48}><WindowsLogo /></Slot>
      <SearchBox>
        <Svg w={17} h={17} stroke="#222" strokeWidth="1.300"><circle cx="10.500" cy="6" r="5" /><path d="M7 9.500L.8 16" /></Svg>
        <SearchText>Type here to search</SearchText>
        <Tennis />
        <Slot $w={5} />
      </SearchBox>
      <Slot $w={48}><Svg w={16}><circle cx="8" cy="8" r="6.800" stroke="#fff" strokeWidth="1.800" /></Svg></Slot>
      <Slot $w={49}><TaskView /></Slot>
      <Apps>
        {APPS.map(([Icon, state, badge], i) => (
          <AppButton key={i} $state={state}><Icon badge={badge} /><Under $state={state} /></AppButton>
        ))}
      </Apps>
      <Tray>
        <Slot $w={22}><Moon /></Slot>
        <Slot $w={9} />
        <TrayText $w={36} $fs={14} $ls={-0.6}>60°F</TrayText>
        <TrayText $w={50} $fs={14} $ls={-0.5}>Clear</TrayText>
        <Slot $w={32}><Svg w={12} h={7} stroke="#fff" strokeWidth="1.300"><path d="M.5 6.500L6 1l5.500 5.500" /></Svg></Slot>
        <Slot $w={32}><Svg w={12} h={16} stroke="#fff"><rect x=".5" y="4.500" width="8" height="7" rx="1" /><path d="M8.500 7l3-2v6l-3-2M1.500 2.500C3 .5 6 .5 7.500 2.500M1.500 13.500c1.500 2 4.500 2 6 0" /></Svg></Slot>
        <Slot $w={32}><Svg w={17} h={16}><path d="M1 3l14-2v12H1zM5 5.500a3 3 0 0 1 5 0M10 3v2.500H7.500M10 8.500a3 3 0 0 1-5 0M5 11V8.500h2.500" stroke="#fff" /><circle cx="13" cy="12" r="3.500" fill="#e81123" /></Svg></Slot>
        <Slot $w={32}><Svg w={17} h={11}><path d="M3 8a3 3 0 0 1 1-5 4.500 4.500 0 0 1 8.500 1A3.500 3.500 0 0 1 14 10z" fill="#b7bcc3" /><path d="M3 11a3 3 0 0 1 0-5.500c2-.5 3 0 4 1 2-2 5-1.500 6 .500a2.300 2.300 0 0 1 1 4z" fill="#fff" /></Svg></Slot>
        <Slot $w={32}><Svg w={16} h={9}><path d="M.5.5h13v8H.5z" stroke="#fff" /><path d="M2 2h6v5H2zM14 3h1.500v3H14z" fill="#fff" /></Svg></Slot>
        <Slot $w={34}><Svg w={14}><g stroke="#aeb4bd"><path d="M1 13A12 12 0 0 1 13 1M4.500 13A8.500 8.500 0 0 1 13 4.500" opacity=".7" /><path d="M7.500 13A5.500 5.500 0 0 1 13 7.500" stroke="#fff" /></g><circle cx="12" cy="12" r="1.600" fill="#fff" /></Svg></Slot>
        <Slot $w={28}><Svg w={17} h={14} stroke="#fff"><path d="M.5 5h2.500L6.500 1.500v11L3 9H.5zM9 4.500c1.500 1.500 1.500 3.500 0 5M11.500 2.500c2.500 2.500 2.500 6.500 0 9M14 1c3.500 3.500 3.500 8.500 0 12" /></Svg></Slot>
        <Slot $w={7} />
        <TrayText $w={26} $align="center" $ls={-0.3}>{"ENG\nUS"}</TrayText>
        <Slot $w={9} />
        <TrayText $w={60} $align="right" $ls={-0.45}>{"09:57 p. m.\n15/01/2023"}</TrayText>
        <Slot $w={54}><Svg w={16} h={16}><path d="M.5.5h15v11.500h-5l-2.500 3-2.500-3h-5z" stroke="#fff" strokeWidth="1.200" /></Svg></Slot>
        <DesktopEdge />
      </Tray>
    </TaskBar>
  );
}

export default function App() {
  return (
    <Screen>
      <Global />
      <BrowserChrome />
      <Header />
      <Workspace>
        <Editor>
          <Toolbar />
          <FormulaRow>
            <NameBox>H4<Caret $raised /></NameBox>
            <Divider />
            <Fx>fx</Fx>
            <Divider />
            <FormulaText>13:00 a 21</FormulaText>
          </FormulaRow>
          <Sheet />
          <SheetTabs />
        </Editor>
        <Side />
      </Workspace>
      <WindowsTaskbar />
    </Screen>
  );
}
